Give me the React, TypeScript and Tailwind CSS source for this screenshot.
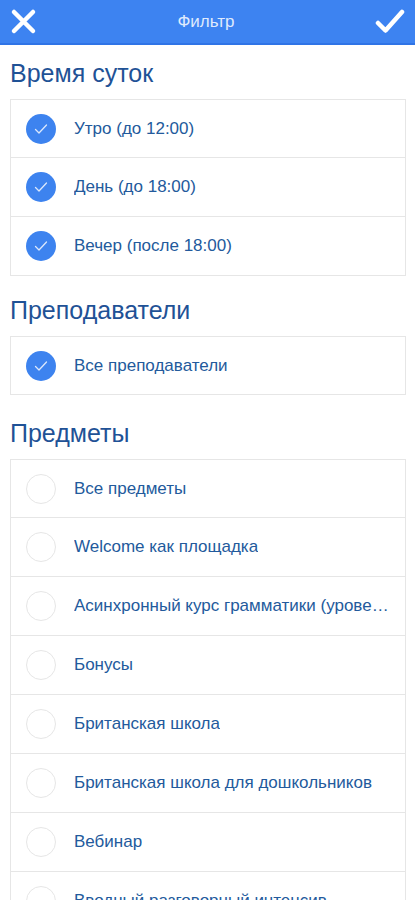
import { useState } from "react";

type Item = { label: string; checked: boolean };

const sections: { title: string; items: Item[] }[] = [
  {
    title: "Время суток",
    items: [
      { label: "Утро (до 12:00)", checked: true },
      { label: "День (до 18:00)", checked: true },
      { label: "Вечер (после 18:00)", checked: true },
    ],
  },
  {
    title: "Преподаватели",
    items: [{ label: "Все преподаватели", checked: true }],
  },
  {
    title: "Предметы",
    items: [
      { label: "Все предметы", checked: false },
      { label: "Welcome как площадка", checked: false },
      { label: "Асинхронный курс грамматики (уровень A1)", checked: false },
      { label: "Бонусы", checked: false },
      { label: "Британская школа", checked: false },
      { label: "Британская школа для дошкольников", checked: false },
      { label: "Вебинар", checked: false },
      { label: "Вводный разговорный интенсив", checked: false },
      { label: "Грамматика", checked: false },
    ],
  },
];

function Check({ on }: { on: boolean }) {
  if (!on) {
    return <div className="h-[30px] w-[30px] shrink-0 rounded-full border border-[#e6e6e6] bg-white" />;
  }
  return (
    <div className="flex h-[30px] w-[30px] shrink-0 items-center justify-center rounded-full bg-[#3d83ef]">
      <svg width="16" height="16" viewBox="0 0 16 16" fill="none">
        <path d="M2.5 8.5l3.5 3.5 7.5-8" stroke="#dbe8fc" strokeWidth="1.3" strokeLinecap="round" strokeLinejoin="round" />
      </svg>
    </div>
  );
}

export default function App() {
  const [state, setState] = useState(sections);

  const toggle = (s: number, i: number) => {
    setState((prev) =>
      prev.map((sec, si) =>
        si !== s
          ? sec
          : { ...sec, items: sec.items.map((it, ii) => (ii === i ? { ...it, checked: !it.checked } : it)) }
      )
    );
  };

  return (
    <div className="h-[900px] overflow-hidden bg-white font-[Liberation_Sans,Arial,sans-serif]">
      {/* Header */}
      <div className="flex h-[45px] items-center justify-between border-b-2 border-[#2f74e6] bg-[#3d83f1] px-[10px]">
        <svg width="27" height="27" viewBox="0 0 27 27" fill="none">
          <path d="M4 4l19 19M23 4L4 23" stroke="white" strokeWidth="4.5" strokeLinecap="round" />
        </svg>
        <span className="text-[17px] text-[#dfeafd]">Фильтр</span>
        <svg width="30" height="27" viewBox="0 0 30 27" fill="none">
          <path d="M3 15l7.5 7.5L27 4" stroke="white" strokeWidth="4.5" strokeLinecap="round" strokeLinejoin="round" />
        </svg>
      </div>

      {state.map((sec, s) => (
        <div key={sec.title}>
          <h2
            className={
              "px-[10px] pb-[13px] text-[25px] leading-[26px] text-[#1f5296] " +
              (s === 0 ? "pt-[15px]" : s === 1 ? "pt-[21px]" : "pt-[25px]")
            }
          >
            {sec.title}
          </h2>
          <div className="mx-[10px] w-[396px] border border-[#e6e6e6] bg-white">
            {sec.items.map((it, i) => (
              <button
                key={it.label}
                onClick={() => toggle(s, i)}
                className={
                  "flex w-full items-center gap-[18px] pl-[15px] pr-[14px] text-left " +
                  (i > 0 ? "h-[59px] border-t border-[#e6e6e6]" : "h-[57px]")
                }
              >
                <Check on={it.checked} />
                <span className="truncate text-[17px] text-[#235a9c]">{it.label}</span>
              </button>
            ))}
          </div>
        </div>
      ))}
    </div>
  );
}
